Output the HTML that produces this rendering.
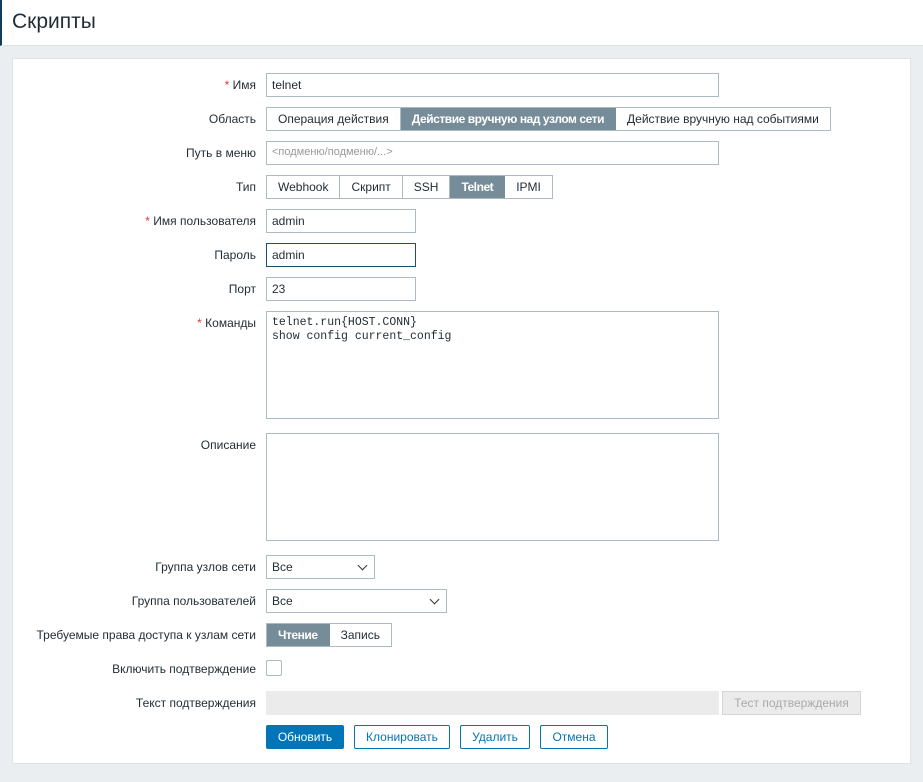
<!DOCTYPE html><html><head><meta charset="utf-8"><style>
*{box-sizing:border-box}
body{margin:0;width:923px;height:782px;background:#ebeef0;font-family:"Liberation Sans",Arial,sans-serif;font-size:12px;color:#1f2c33;position:relative;overflow:hidden}
.hdr{position:absolute;left:0;top:0;width:923px;height:46px;background:#fff;border-bottom:1px solid #dfe4e7;border-left:2px solid #0e3e5c}
.hdr h1{margin:0;position:absolute;left:10px;top:10px;font-size:21px;font-weight:normal;color:#1f2c33}
.card{position:absolute;left:12px;top:58px;width:899px;height:706px;background:#fff;border:1px solid #dfe4e7}
.a{position:absolute}
.lbl{position:absolute;right:667px;text-align:right;white-space:nowrap}
.req:before{content:"* ";color:#e33734}
.in{position:absolute;height:24px;border:1px solid #acbbc2;background:#fff;padding:4px 5px;white-space:nowrap}
.seg{position:absolute;height:24px;border:1px solid #acbbc2;display:flex;background:#fff}
.seg div{padding:0 11px;line-height:22px;border-right:1px solid #acbbc2;white-space:nowrap}
.seg div:last-child{border-right:0}
.seg .on{background:#768d99;color:#fff;font-weight:bold;letter-spacing:-0.45px;border-color:#768d99}
.btn{position:absolute;height:24px;border:1px solid #0275b8;color:#0275b8;background:#fff;text-align:center;line-height:22px;border-radius:2px}
.chev{position:absolute;right:8px;top:6px;width:7px;height:7px;border-right:1.3px solid #333;border-bottom:1.3px solid #333;transform:rotate(45deg)}
</style></head><body>
<div class="hdr"><h1>Скрипты</h1></div>
<div class="card"></div>
<div class="lbl req" style="top:78px">Имя</div>
<div class="in" style="left:266px;top:73px;width:453px">telnet</div>
<div class="lbl" style="top:112px">Область</div>
<div class="seg" style="left:266px;top:107px"><div>Операция действия</div><div class="on">Действие вручную над узлом сети</div><div>Действие вручную над событиями</div></div>
<div class="lbl" style="top:146px">Путь в меню</div>
<div class="in" style="left:266px;top:141px;width:453px;color:#999;font-size:11px">&lt;подменю/подменю/...&gt;</div>
<div class="lbl" style="top:180px">Тип</div>
<div class="seg" style="left:266px;top:175px"><div>Webhook</div><div>Скрипт</div><div>SSH</div><div class="on">Telnet</div><div>IPMI</div></div>
<div class="lbl req" style="top:214px">Имя пользователя</div>
<div class="in" style="left:266px;top:209px;width:150px">admin</div>
<div class="lbl" style="top:248px">Пароль</div>
<div class="in" style="left:266px;top:243px;width:150px;border-color:#1c4f68">admin</div>
<div class="lbl" style="top:282px">Порт</div>
<div class="in" style="left:266px;top:277px;width:150px">23</div>
<div class="lbl req" style="top:316px">Команды</div>
<div class="in" style="left:266px;top:311px;width:453px;height:108px;font-family:'Liberation Mono',monospace;font-size:11.5px;line-height:14px;white-space:pre">telnet.run{HOST.CONN}
show config current_config</div>
<div class="lbl" style="top:438px">Описание</div>
<div class="in" style="left:266px;top:433px;width:453px;height:108px"></div>
<div class="lbl" style="top:560px">Группа узлов сети</div>
<div class="in" style="left:266px;top:555px;width:109px">Все<span class="chev"></span></div>
<div class="lbl" style="top:594px">Группа пользователей</div>
<div class="in" style="left:266px;top:589px;width:181px">Все<span class="chev"></span></div>
<div class="lbl" style="top:628px">Требуемые права доступа к узлам сети</div>
<div class="seg" style="left:266px;top:623px"><div class="on">Чтение</div><div>Запись</div></div>
<div class="lbl" style="top:662px">Включить подтверждение</div>
<div class="in" style="left:266px;top:660px;width:16px;height:16px;border-radius:2px"></div>
<div class="lbl" style="top:696px">Текст подтверждения</div>
<div class="in" style="left:266px;top:691px;width:453px;background:#ebebeb;border-color:#ebebeb"></div>
<div class="a" style="left:722px;top:691px;width:139px;height:24px;border:1px solid #d5d5d5;background:#ebebeb;color:#aaa;text-align:center;line-height:22px">Тест подтверждения</div>
<div class="btn" style="left:266px;top:725px;width:78px;background:#0275b8;color:#fff">Обновить</div>
<div class="btn" style="left:354px;top:725px;width:96px">Клонировать</div>
<div class="btn" style="left:460px;top:725px;width:70px">Удалить</div>
<div class="btn" style="left:540px;top:725px;width:68px">Отмена</div>
</body></html>
